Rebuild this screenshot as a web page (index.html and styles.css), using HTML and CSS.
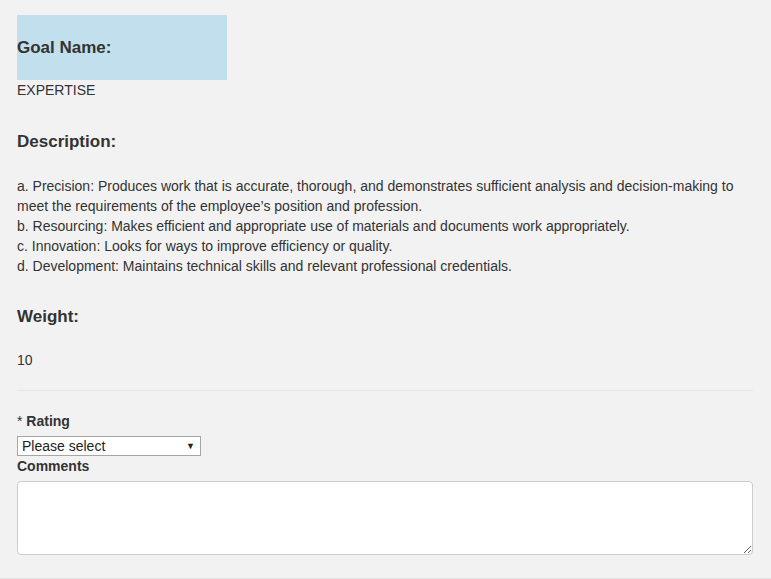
FILE: index.html
```html
<!DOCTYPE html>
<html>
<head>
<meta charset="utf-8">
<link rel="stylesheet" href="styles.css">
</head>
<body>
<div class="page">
  <div class="goal-box"><h3 class="heading">Goal Name:</h3></div>
  <div class="value">EXPERTISE</div>
  <h3 class="heading section">Description:</h3>
  <div class="desc">
    a. Precision: Produces work that is accurate, thorough, and demonstrates sufficient analysis and decision-making to meet the requirements of the employee’s position and profession.<br>
    b. Resourcing: Makes efficient and appropriate use of materials and documents work appropriately.<br>
    c. Innovation: Looks for ways to improve efficiency or quality.<br>
    d. Development: Maintains technical skills and relevant professional credentials.
  </div>
  <h3 class="heading section weight">Weight:</h3>
  <div class="value num">10</div>
  <hr class="divider">
  <label class="label"><span class="star">*</span> Rating</label>
  <div class="select">
    <span>Please select</span>
    <span class="arrow">▼</span>
  </div>
  <label class="label">Comments</label>
  <textarea class="comments"></textarea>
</div>
</body>
</html>
```
FILE: styles.css
```css
html, body {
  margin: 0;
  padding: 0;
}
body {
  background: #f2f2f2;
  font-family: "Liberation Sans", Arial, sans-serif;
  font-size: 14px;
  color: #333;
  width: 771px;
  height: 579px;
  overflow: hidden;
  border-bottom: 1px solid #e2e2e2;
  box-sizing: border-box;
}
.page {
  padding: 15px 18px 0 17px;
  display: flex;
  flex-direction: column;
}
.goal-box {
  width: 210px;
  height: 65px;
  background: #c2dfee;
  display: flex;
  align-items: center;
}
.heading {
  margin: 0;
  font-size: 17px;
  font-weight: bold;
  line-height: 20px;
}
.value {
  margin-top: 1px;
  line-height: 18px;
}
.section {
  margin-top: 33px;
}
.desc {
  margin-top: 24px;
  line-height: 20px;
}
.weight {
  margin-top: 31px;
}
.num {
  margin-top: 24px;
}
.divider {
  margin: 21px 0 0 0;
  border: 0;
  border-top: 1px solid #e6e6e6;
  height: 0;
}
.label {
  display: block;
  margin-top: 22px;
  font-weight: bold;
  line-height: 17px;
}
.star {
  font-weight: normal;
}
.select {
  margin-top: 6px;
  width: 184px;
  height: 20px;
  box-sizing: border-box;
  border: 1px solid #a6a6a6;
  background: #fff;
  display: flex;
  align-items: center;
  justify-content: space-between;
  padding: 0 5px 0 4px;
  font-size: 14px;
  color: #222;
}
.arrow {
  font-size: 9px;
}
.select + .label {
  margin-top: 2px;
}
.comments {
  margin-top: 6px;
  height: 74px;
  box-sizing: border-box;
  border: 1px solid #ccc;
  border-radius: 4px;
  background: #fff;
  resize: vertical;
}
```
